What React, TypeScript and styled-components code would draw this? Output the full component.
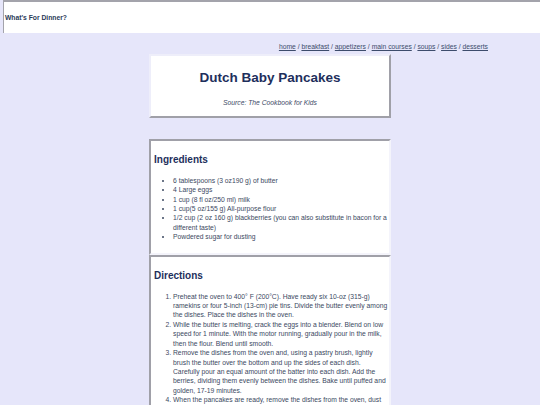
import styled, { createGlobalStyle } from "styled-components";

const GlobalStyle = createGlobalStyle`
  html, body {
    margin: 0;
    padding: 0;
    background: #e6e6fa;
  }
  body {
    font-family: "Liberation Sans", Arial, sans-serif;
    font-size: 6.75px;
    line-height: 9.4px;
    color: #3b4861;
  }
`;

const Page = styled.div`
  min-height: 100vh;
  background: #e6e6fa;
`;

const Header = styled.header`
  display: flex;
  align-items: center;
  height: 31px;
  margin-left: 3px;
  padding-left: 1px;
  background: #ffffff;
  border-style: solid;
  border-width: 2px 0 0 1px;
  border-color: #a3a3ab;
`;

const SiteName = styled.span`
  font-weight: bold;
  color: #2a3a58;
`;

const Nav = styled.nav`
  display: flex;
  justify-content: flex-end;
  padding: 9px 52px 3px 0;
`;

const NavLink = styled.a`
  color: #3d4c6c;
  text-decoration: underline;
`;

const Sep = styled.span`
  white-space: pre;
`;

const Card = styled.section<{ $raised?: boolean; $gap?: number }>`
  box-sizing: border-box;
  width: 242px;
  margin: 0 auto ${(p) => p.$gap ?? 0}px;
  background: #ffffff;
  border: 2px solid;
  border-color: ${(p) =>
    p.$raised
      ? "#eeeefa #a0a0a8 #a0a0a8 #eeeefa"
      : "#a0a0a8 #f4f4fb #f4f4fb #a0a0a8"};
  padding: 13px 1px 11px 3px;
`;

const TitleCard = styled(Card)`
  text-align: center;
  padding: 14px 3px 8.5px;
`;

const Title = styled.h1`
  margin: 0;
  font-size: 13.5px;
  line-height: 16px;
  font-weight: bold;
  color: #1e2f5c;
`;

const Source = styled.p`
  margin: 11.5px 0 0;
  font-style: italic;
  color: #3d4a66;
`;

const SectionTitle = styled.h2`
  margin: 0 0 10px;
  font-size: 10px;
  line-height: 12px;
  font-weight: bold;
  color: #1e2f5c;
`;

const BulletList = styled.ul`
  margin: 0 -3px 0 0;
  padding-left: 19px;
`;

const NumberList = styled.ol`
  margin: 0;
  padding-left: 19px;
`;

const links = ["home", "breakfast", "appetizers", "main courses", "soups", "sides", "desserts"];

const ingredients = [
  "6 tablespoons (3 oz190 g) of butter",
  "4 Large eggs",
  "1 cup (8 fl oz/250 ml) milk",
  "1 cup(5 oz/155 g) All-purpose flour",
  "1/2 cup (2 oz 160 g) blackberries (you can also substitute in bacon for a different taste)",
  "Powdered sugar for dusting",
];

const directions = [
  "Preheat the oven to 400° F (200°C). Have ready six 10-oz (315-g) ramekins or four 5-inch (13-cm) pie tins. Divide the butter evenly among the dishes. Place the dishes in the oven.",
  "While the butter is melting, crack the eggs into a blender. Blend on low speed for 1 minute. With the motor running, gradually pour in the milk, then the flour. Blend until smooth.",
  "Remove the dishes from the oven and, using a pastry brush, lightly brush the butter over the bottom and up the sides of each dish. Carefully pour an equal amount of the batter into each dish. Add the berries, dividing them evenly between the dishes. Bake until puffed and golden, 17-19 minutes.",
  "When the pancakes are ready, remove the dishes from the oven, dust with powdered sugar and serve right away.",
];

export default function App() {
  return (
    <>
      <GlobalStyle />
      <Page>
        <Header>
          <SiteName>What's For Dinner?</SiteName>
        </Header>

        <Nav>
          {links.map((l, i) => (
            <span key={l}>
              {i > 0 && <Sep> / </Sep>}
              <NavLink href="#">{l}</NavLink>
            </span>
          ))}
        </Nav>

        <TitleCard $raised $gap={21}>
          <Title>Dutch Baby Pancakes</Title>
          <Source>Source: The Cookbook for Kids</Source>
        </TitleCard>

        <Card>
          <SectionTitle>Ingredients</SectionTitle>
          <BulletList>
            {ingredients.map((item) => (
              <li key={item}>{item}</li>
            ))}
          </BulletList>
        </Card>

        <Card>
          <SectionTitle>Directions</SectionTitle>
          <NumberList>
            {directions.map((step) => (
              <li key={step}>{step}</li>
            ))}
          </NumberList>
        </Card>
      </Page>
    </>
  );
}
